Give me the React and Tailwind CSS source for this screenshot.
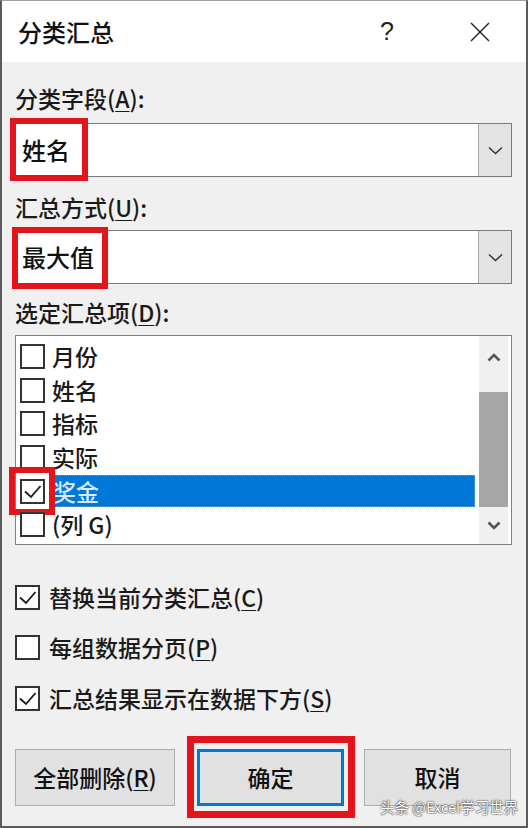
import React from "react";

function U({ children }) {
  return <span className="underline decoration-1 underline-offset-[3px]">{children}</span>;
}

function Check({ checked }) {
  return (
    <div className="relative w-[25px] h-[25px] shrink-0 border-2 border-[#333333] bg-white">
      {checked && (
        <svg className="absolute left-[-2px] top-[-2px]" width="25" height="25" viewBox="0 0 25 25">
          <polyline points="5,12.5 11,18 20.5,7" fill="none" stroke="#1e1e1e" strokeWidth="1.9" />
        </svg>
      )}
    </div>
  );
}

function Chevron() {
  return (
    <svg width="15" height="9" viewBox="0 0 15 9">
      <polyline points="1,1.5 7.5,7.5 14,1.5" fill="none" stroke="#333" strokeWidth="1.5" />
    </svg>
  );
}

function Label({ children, className }) {
  return (
    <div className={"h-[30px] flex items-center text-[23px] leading-none text-[#1a1a1a] " + (className || "")}>
      {children}
    </div>
  );
}

function Combo({ value, redBox, className }) {
  return (
    <div className={"relative h-[54px] border border-[#7a7a7a] bg-white flex " + (className || "")}>
      <div className="flex-1 flex items-center pl-[6px] text-[24px] leading-none text-[#111]">{value}</div>
      <div className="w-[33px] bg-[#e3e3e3] border-l border-[#a6a6a6] flex items-center justify-center">
        <Chevron />
      </div>
      {redBox}
    </div>
  );
}

function Opt({ checked, children }) {
  return (
    <div className="h-[34px] flex items-center">
      <Check checked={checked} />
      <div className="ml-[9px] text-[23px] leading-none text-[#1a1a1a]">{children}</div>
    </div>
  );
}

export default function App() {
  const items = ["月份", "姓名", "指标", "实际", "奖金", "(列 G)"];
  return (
    <div className="relative w-[528px] h-[828px] overflow-hidden border-x-2 border-b-2 border-t border-x-[#5a5a5a] border-b-[#5a5a5a] border-t-[#a0a0a0] bg-[#f0f0f0] flex flex-col font-medium font-['Noto_Sans_CJK_SC','Noto_Sans',sans-serif]">
      {/* title bar */}
      <div className="h-[61px] bg-white flex items-center pl-[16px] pr-[1px]">
        <div className="text-[24px] leading-none text-[#111]">分类汇总</div>
        <div className="flex-1" />
        <div className="w-[90px] flex justify-center pr-[6px] text-[25px] leading-none text-[#222] font-['Liberation_Sans',sans-serif]">?</div>
        <div className="w-[90px] flex justify-center">
          <svg width="20" height="20" viewBox="0 0 20 20">
            <line x1="1" y1="1" x2="19" y2="19" stroke="#222" strokeWidth="1.5" />
            <line x1="19" y1="1" x2="1" y2="19" stroke="#222" strokeWidth="1.5" />
          </svg>
        </div>
      </div>

      {/* body */}
      <div className="pl-[13px] pr-[14px] flex flex-col">
        <Label className="mt-[21px]">
          分类字段(<U>A</U>):
        </Label>
        <Combo
          className="mt-[10px]"
          value="姓名"
          redBox={<div className="absolute left-[-6px] top-[-6px] w-[78px] h-[63px] border-[6px] border-[#e3141b]" />}
        />
        <Label className="mt-[15px]">
          汇总方式(<U>U</U>):
        </Label>
        <Combo
          className="mt-[8px]"
          value="最大值"
          redBox={<div className="absolute left-[-4px] top-[-4px] w-[96px] h-[62px] border-[6px] border-[#e3141b]" />}
        />
        <Label className="mt-[13px]">
          选定汇总项(<U>D</U>):
        </Label>

        {/* list box */}
        <div className="mt-[8px] h-[210px] border border-[#828282] bg-white flex">
          <div className="flex-1 pt-[4px] pl-[4px] flex flex-col">
            {items.map((t, i) => (
              <div key={t} className="h-[33.6px] flex items-center">
                <div className="relative">
                  <Check checked={i === 4} />
                  {i === 4 && (
                    <div className="absolute left-[-11px] top-[-12px] w-[46px] h-[48px] border-[6px] border-[#e3141b]" />
                  )}
                </div>
                {i === 4 ? (
                  <div className="ml-[7px] h-[32.6px] flex-1 flex items-center bg-[#0078d7] border border-dotted border-[#5aa2e6] text-[23px] leading-none text-[#d6ebff]">
                    {t}
                  </div>
                ) : (
                  <div className="ml-[7px] flex-1 flex items-center text-[23px] leading-none text-[#1a1a1a]">{t}</div>
                )}
              </div>
            ))}
          </div>
          <div className="w-[29px] ml-[4px] mr-[3px] bg-[#f0f0f0] flex flex-col">
            <div className="h-[42px] flex items-center justify-center">
              <svg width="14" height="9" viewBox="0 0 14 9">
                <polyline points="1.5,7.5 7,2 12.5,7.5" fill="none" stroke="#555" strokeWidth="2.6" />
              </svg>
            </div>
            <div className="h-[14px]" />
            <div className="h-[115px] bg-[#a6a6a6]" />
            <div className="flex-1 flex items-center justify-center">
              <svg width="14" height="9" viewBox="0 0 14 9">
                <polyline points="1.5,1.5 7,7 12.5,1.5" fill="none" stroke="#555" strokeWidth="2.6" />
              </svg>
            </div>
          </div>
        </div>

        {/* options */}
        <div className="mt-[35px] flex flex-col gap-[16.5px]">
          <Opt checked>
            替换当前分类汇总(<U>C</U>)
          </Opt>
          <Opt>
            每组数据分页(<U>P</U>)
          </Opt>
          <Opt checked>
            汇总结果显示在数据下方(<U>S</U>)
          </Opt>
        </div>

        {/* buttons */}
        <div className="mt-[34px] h-[57px] flex">
          <div className="w-[160px] h-full bg-[#e1e1e1] border border-[#adadad] flex items-center justify-center text-[23px] leading-none text-[#111]">
            全部删除(<U>R</U>)
          </div>
          <div className="relative ml-[22px] w-[147px] h-full">
            <div className="absolute left-[-10px] top-[-13px] w-[168px] h-[82px] border-[7px] border-[#e3141b]" />
            <div className="relative w-full h-full bg-[#e1e1e1] border-[3px] border-[#0078d7] flex items-center justify-center text-[23px] leading-none text-[#111]">
              确定
            </div>
          </div>
          <div className="ml-[20px] w-[147px] h-full bg-[#e1e1e1] border border-[#adadad] flex items-center justify-center text-[23px] leading-none text-[#111]">
            取消
          </div>
        </div>
      </div>

      {/* watermark */}
      <div className="absolute left-[378px] top-[799px] text-[14.5px] leading-none font-normal text-white [text-shadow:0_0_2px_#222,0_0_1px_#222]">
        头条 @Excel学习世界
      </div>
    </div>
  );
}
